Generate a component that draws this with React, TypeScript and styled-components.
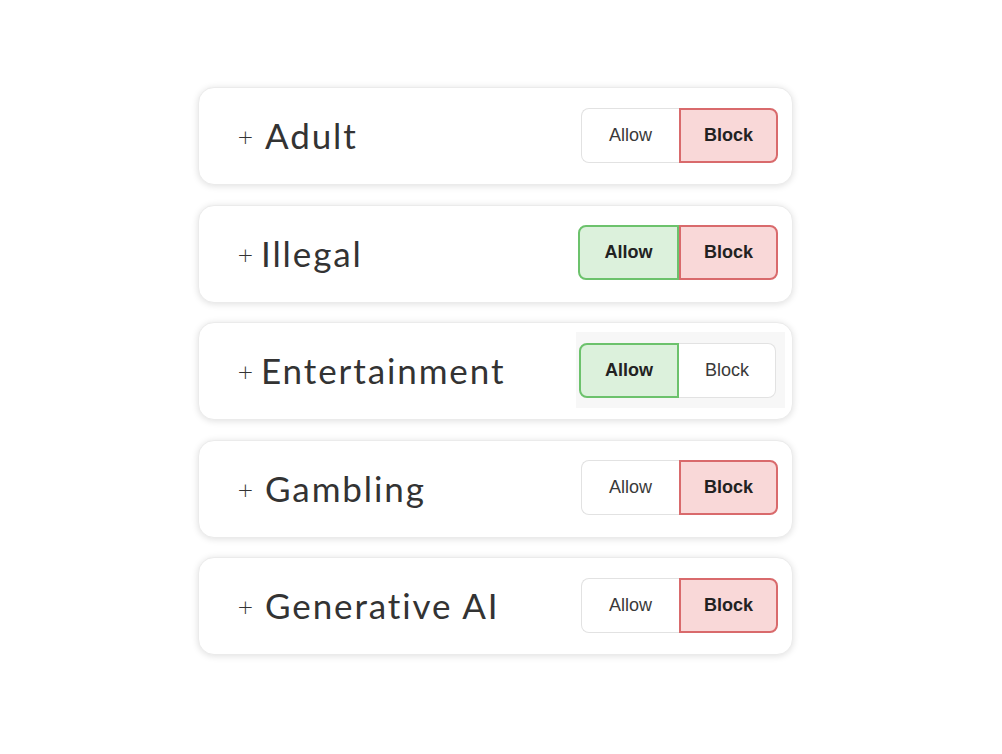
import React from "react";
import styled, { createGlobalStyle, css } from "styled-components";

const Global = createGlobalStyle`
  html, body { margin: 0; padding: 0; background: #ffffff; }
  body { font-family: "Lato", "Liberation Sans", sans-serif; }
`;

const Page = styled.div`
  width: 1002px;
  height: 754px;
  padding: 87px 0 0 198px;
  box-sizing: border-box;
  display: flex;
  flex-direction: column;
  gap: 19.5px;
`;

const Card = styled.div`
  width: 595px;
  height: 98px;
  box-sizing: border-box;
  border-radius: 16px;
  background: #fff;
  border: 1px solid #ebebeb;
  box-shadow: 0 1px 7px rgba(0, 0, 0, 0.13);
  display: flex;
  align-items: center;
  padding: 0 14px 0 38px;
`;

const Plus = styled.span<{ $gap: number }>`
  font-family: "DejaVu Sans", sans-serif;
  font-weight: 200;
  font-size: 20px;
  color: #333;
  width: 15px;
  margin-top: 2px;
  margin-right: ${(p) => p.$gap}px;
`;

const Title = styled.span`
  font-family: "Lato", sans-serif;
  font-size: 35px;
  color: #333;
  letter-spacing: 1.9px;
  flex: 1;
  margin-top: -2px;
`;

const ToggleWrap = styled.div<{ $shade?: boolean }>`
  display: flex;
  margin-top: -2px;
  ${(p) =>
    p.$shade &&
    css`
      background: #f7f7f7;
      padding: 11px 9px 10px 3px;
      margin-right: -7px;
    `}
`;

type SegKind = "off" | "allow" | "block";

const Seg = styled.div<{ $kind: SegKind; $w: number; $side: "l" | "r" }>`
  width: ${(p) => p.$w}px;
  height: 55px;
  box-sizing: border-box;
  display: flex;
  align-items: center;
  justify-content: center;
  font-family: "Liberation Sans", Arial, sans-serif;
  font-size: 18px;
  border-radius: ${(p) => (p.$side === "l" ? "8px 0 0 8px" : "0 8px 8px 0")};
  ${(p) =>
    p.$kind === "off" &&
    css`
      background: #fff;
      border: 1.5px solid #e2e2e2;
      color: #3a3a3a;
      ${p.$side === "l" ? "border-right: none;" : "border-left: none;"}
    `}
  ${(p) =>
    p.$kind === "allow" &&
    css`
      background: #dcf1dc;
      border: 2px solid #6cc26c;
      color: #222;
      font-weight: 700;
    `}
  ${(p) =>
    p.$kind === "block" &&
    css`
      background: #f9d8d8;
      border: 2px solid #d96a6c;
      color: #222;
      font-weight: 700;
    `}
`;

type Row = {
  name: string;
  allow: SegKind;
  block: SegKind;
  gap: number;
  allowW: number;
  blockW: number;
  shade?: boolean;
};

const rows: Row[] = [
  { name: "Adult", allow: "off", block: "block", gap: 13, allowW: 98, blockW: 99 },
  { name: "Illegal", allow: "allow", block: "block", gap: 9, allowW: 101, blockW: 99 },
  { name: "Entertainment", allow: "allow", block: "off", gap: 9, allowW: 100, blockW: 97, shade: true },
  { name: "Gambling", allow: "off", block: "block", gap: 13, allowW: 98, blockW: 99 },
  { name: "Generative AI", allow: "off", block: "block", gap: 13, allowW: 98, blockW: 99 },
];

export default function App() {
  return (
    <>
      <Global />
      <Page>
        {rows.map((r) => (
          <Card key={r.name}>
            <Plus $gap={r.gap}>+</Plus>
            <Title>{r.name}</Title>
            <ToggleWrap $shade={r.shade}>
              <Seg $kind={r.allow} $w={r.allowW} $side="l">Allow</Seg>
              <Seg $kind={r.block} $w={r.blockW} $side="r">Block</Seg>
            </ToggleWrap>
          </Card>
        ))}
      </Page>
    </>
  );
}
